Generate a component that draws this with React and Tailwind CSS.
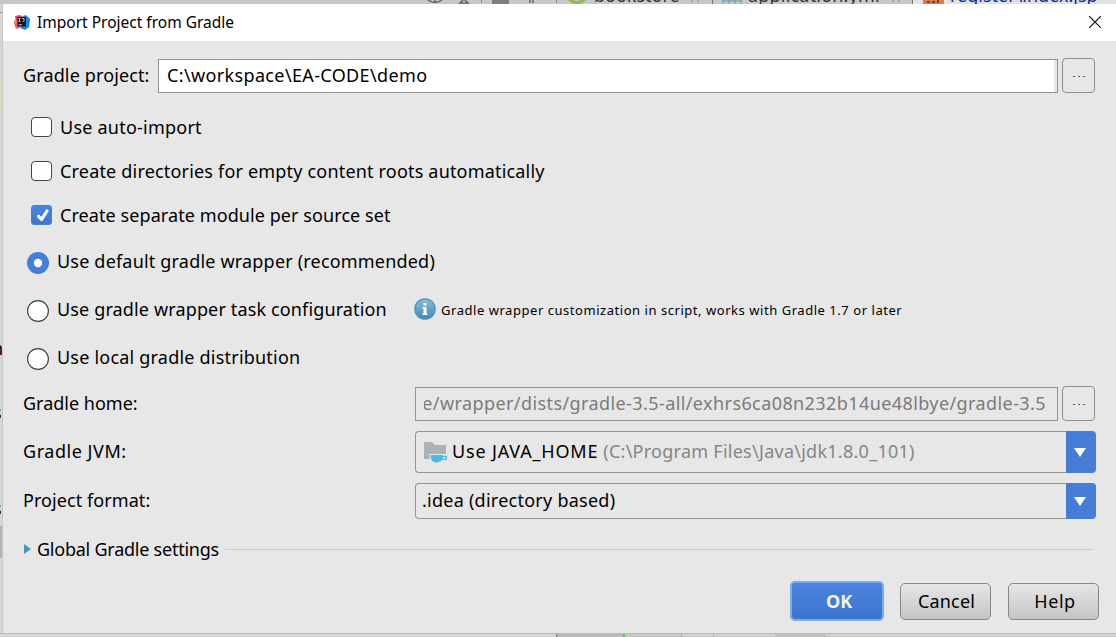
import React from "react";

function IdeaLogo() {
  return (
    <svg className="-mt-px h-4 w-4 shrink-0" viewBox="0 0 16 16">
      <path d="M1 2l5-1 3 2-2 9-5 2-1-3 1-3z" fill="#f0356c" />
      <path d="M0 8.500l4-1 2 6-4 1.500z" fill="#f0506a" />
      <path d="M0 6l3 1-1 3-2-1z" fill="#f58a4b" />
      <path d="M9 2l3-1 4 4-1 8-4 3-5-2 2-3z" fill="#1683f0" />
      <path d="M3.500 3h8.500v9.500H3.500z" fill="#17171c" />
      <path d="M4.500 4.500h2M5.500 4.500v3M4.500 7.500h2M8.200 4.500h1.800v2.500q0 .8-1.200.6M4.500 10.700h3.500" stroke="#fff" strokeWidth=".7" fill="none" />
    </svg>
  );
}

function Check({ checked, label, className }) {
  return (
    <label className="flex h-11 items-center pl-[28px]">
      {checked ? (
        <svg className="h-5 w-[21px] shrink-0" viewBox="0 0 21 20">
          <defs>
            <linearGradient id="checkFill" x1="0" y1="0" x2="0" y2="1">
              <stop offset="0" stopColor="#4a86e2" />
              <stop offset="1" stopColor="#3f74cb" />
            </linearGradient>
          </defs>
          <rect x=".5" y=".5" width="20" height="19" rx="2.500" fill="url(#checkFill)" stroke="#3f83e0" />
          <path d="M7.600 11.300l3 3 5.400-8.300" fill="none" stroke="#fff" strokeWidth="3.200" strokeLinecap="round" strokeLinejoin="round" />
        </svg>
      ) : (
        <span className="h-5 w-[21px] shrink-0 rounded-[4px] border border-[#444] bg-white" />
      )}
      <span className={"ml-2 " + className}>{label}</span>
    </label>
  );
}

function Radio({ checked, label, className }) {
  return (
    <span className="flex items-center pl-6">
      <svg className="h-[22px] w-[22px] shrink-0" viewBox="0 0 22 22">
        {checked ? (
          <>
            <circle cx="11" cy="11" r="11" fill="#457ed8" />
            <circle cx="11" cy="11" r="4.200" fill="#fff" />
          </>
        ) : (
          <circle cx="11" cy="11" r="10.400" fill="#fff" stroke="#3c3c3c" strokeWidth="1.100" />
        )}
      </svg>
      <span className={"-mt-[5px] ml-2 " + className}>{label}</span>
    </span>
  );
}

function Browse() {
  return (
    <button className="ml-1 flex h-[35px] w-[33px] shrink-0 items-center justify-center gap-[3px] rounded-[4px] border border-[#8e8e8e]">
      <i className="mt-px h-px w-[2px] bg-[#555]" />
      <i className="mt-px h-px w-[2px] bg-[#555]" />
      <i className="mt-px h-px w-[2px] bg-[#555]" />
    </button>
  );
}

function Select({ children, className }) {
  return (
    <div className={"flex w-[681px] " + className}>
      <div className="flex min-w-0 flex-1 items-center rounded-l-[4px] border border-r-0 border-[#949494]">{children}</div>
      <div className="flex w-[30px] items-center justify-center rounded-r-[4px] bg-[#457dd7]">
        <svg className="-ml-[2px] h-[9px] w-3" viewBox="0 0 12 9">
          <path d="M0 0h12L6 9z" fill="#fff" />
        </svg>
      </div>
    </div>
  );
}

function InfoIcon() {
  return (
    <svg className="h-[22px] w-[22px] shrink-0" viewBox="0 0 22 22">
      <defs>
        <linearGradient id="infoFill" x1="0" y1="0" x2="0" y2="1">
          <stop offset="0" stopColor="#8fbdd8" />
          <stop offset="1" stopColor="#3b89b8" />
        </linearGradient>
      </defs>
      <circle cx="11" cy="11" r="10.200" fill="url(#infoFill)" stroke="#4c94bf" strokeWidth="1.200" />
      <path d="M9.500 5h3v2.500h-3zM8.500 9h4v6.500h1V17h-5v-1.500h1v-5h-1z" fill="#fff" />
    </svg>
  );
}

function JdkIcon() {
  return (
    <svg className="h-[22px] w-6 shrink-0" viewBox="0 0 24 22">
      <path d="M0 1h8l3 3h11v9H5.500v5H0z" fill="#a9b3b9" />
      <path d="M6.500 14h12.500v.8h4v4h-5c-1.200 2-2.700 2.700-5.500 2.700s-6-1.700-6-7.500z" fill="#4cb8e3" />
      <path d="M18.800 16h2.800v1.400h-2.800z" fill="#e7e7e7" />
    </svg>
  );
}

function EditorTabs() {
  return (
    <div className="h-1 shrink-0 overflow-hidden bg-[#c8c8c8]">
      <div className="-mt-4 flex h-5 text-[18px] leading-[26px] whitespace-nowrap text-[#333]">
        <svg className="ml-[400px] h-5 w-[190px] shrink-0" viewBox="0 0 190 20">
          <path d="M27 15q8 7 16 0M35 14v5M60 19l4-4 4 4zM93 19v-2h15v2zM130 14v5M133 14v5" stroke="#666" strokeWidth="1.500" fill="none" />
          <path d="M81.500 14v5M156.500 14v5" stroke="#8a8a8a" />
          <path d="M169 15q8 7 16 0" stroke="#8fb84f" strokeWidth="3" fill="none" />
        </svg>
        <span className="-mt-[2px] ml-1 w-[92px]">bookstore</span>
        <svg className="h-5 w-[60px] shrink-0" viewBox="0 0 60 20">
          <path d="M5 18l4-4 4 4" stroke="#888" fill="none" />
          <path d="M26.500 14v6" stroke="#777" />
          <path d="M37 14v6M43 14v6M49 14v6M55 14v6M36 17h20" stroke="#5b9db4" fill="none" />
        </svg>
        <span className="-mt-[2px] ml-[2px] w-[140px] tracking-[0.2px]">application.yml</span>
        <svg className="h-5 w-[58px] shrink-0" viewBox="0 0 58 20">
          <path d="M4 18l4-4 4 4" stroke="#888" fill="none" />
          <path d="M25 14h33v6H25z" fill="#e4e4e4" />
          <path d="M24.500 14v6" stroke="#777" />
          <path d="M35 14h21v6H35z" fill="#dc7b4e" />
          <path d="M39 18h3M44 18h3M50 14v5" stroke="#5a2c16" strokeWidth="1.500" />
        </svg>
        <span className="-mt-[2px] flex-1 bg-[#e0e0e0] pl-1 text-[#0a2f9c]">register\index.jsp</span>
      </div>
    </div>
  );
}

export default function App() {
  return (
    <div className="flex h-[637px] w-[1116px] flex-col overflow-hidden bg-[#cfcfcf] text-[18px] leading-6 whitespace-nowrap text-black [font-family:'Noto_Sans','Open_Sans',sans-serif]">
      <EditorTabs />
      <div className="flex h-[629px] shrink-0">
        <div className="w-[3px] shrink-0 overflow-hidden border-r border-[#c8c8c8] bg-[#d6d6d6]">
          <div className="mt-2 h-[66px] border-t border-[#888]" />
          <div className="h-[30px] bg-[#dcd9bd]" />
          <div className="mt-[228px] -ml-2 leading-6">n</div>
          <div className="mt-10 -ml-[7px] leading-6">s</div>
          <div className="mt-[72px] -ml-[7px] leading-6">s</div>
          <div className="mt-[6px] h-8 bg-[#b5b5b5]" />
        </div>
        <div className="flex flex-1 flex-col bg-[#e7e7e7]">
          <header className="flex h-[37px] shrink-0 items-center bg-white pl-[11px]">
            <IdeaLogo />
            <h1 className="-mt-[2px] ml-[7px] text-[15.5px]">Import Project from Gradle</h1>
            <svg className="-mt-px mr-[15px] ml-auto h-3 w-3" viewBox="0 0 12 12">
              <path d="M0 0l12 12M12 0L0 12" stroke="#111" strokeWidth="1.200" />
            </svg>
          </header>

          <div className="mt-[17px] flex h-[35px] shrink-0 items-end pl-5">
            <span className="mb-[2px] w-[135px] self-center tracking-[0.13px]">Gradle project:</span>
            <div className="flex h-[34px] w-[900px] items-center border border-[#949494] bg-white pl-2">
              <span className="mb-[2px] tracking-[0.36px]">C:\workspace\EA-CODE\demo</span>
              <span className="ml-auto h-full w-[3px] bg-[#e7e7e7]" />
            </div>
            <Browse />
          </div>

          <div className="mt-3 shrink-0">
            <Check label="Use auto-import" className="tracking-[0.23px]" />
            <Check label="Create directories for empty content roots automatically" className="tracking-[0.185px]" />
            <Check checked label="Create separate module per source set" className="tracking-[0.08px]" />
          </div>

          <div className="mt-[2px] grid shrink-0 auto-rows-[48px] grid-cols-[411px_1fr] items-center">
            <Radio checked label="Use default gradle wrapper (recommended)" className="tracking-[0.19px]" />
            <span />
            <Radio label="Use gradle wrapper task configuration" className="tracking-[0.14px]" />
            <span className="-mt-1 flex items-center">
              <InfoIcon />
              <span className="mt-px ml-[5px] text-[13px] tracking-[0.54px]">Gradle wrapper customization in script, works with Gradle 1.7 or later</span>
            </span>
            <Radio label="Use local gradle distribution" className="tracking-[0.21px]" />
            <span />
          </div>

          <div className="mt-[3px] flex h-[35px] shrink-0 items-end pl-5">
            <span className="mb-[2px] w-[392px] self-center">Gradle home:</span>
            <div className="flex h-[34px] w-[643px] items-center border border-[#949494] pr-[11px] pl-2">
              <div className="mb-[2px] flex flex-1 justify-end overflow-hidden text-[#7b7b7b]">
                <span className="tracking-[0.41px]">e/wrapper/dists/gradle-3.5-all/exhrs6ca08n232b14ue48lbye/gradle-3.5</span>
              </div>
            </div>
            <Browse />
          </div>

          <div className="mt-[10px] flex h-[42px] shrink-0 items-center pl-5">
            <span className="mb-[2px] w-[392px] tracking-[0.54px]">Gradle JVM:</span>
            <Select className="h-[42px]">
              <span className="ml-2"><JdkIcon /></span>
              <span className="mb-[2px] ml-1 tracking-[0.82px]">Use JAVA_HOME</span>
              <span className="mb-[2px] ml-[5px] tracking-[0.26px] text-[#858585]">(C:\Program Files\Java\jdk1.8.0_101)</span>
            </Select>
          </div>

          <div className="mt-[10px] flex h-9 shrink-0 items-center pl-5">
            <span className="mb-[2px] w-[392px] tracking-[0.07px]">Project format:</span>
            <Select className="h-9">
              <span className="mb-[2px] ml-[6px] tracking-[0.25px]">.idea (directory based)</span>
            </Select>
          </div>

          <div className="mt-[18px] flex h-6 shrink-0 items-center pr-[23px] pl-[21px]">
            <svg className="h-[10px] w-[7px] shrink-0" viewBox="0 0 7 10">
              <path d="M0 0l7 5-7 5z" fill="#4695c5" />
            </svg>
            <span className="ml-[6px] w-[188px] tracking-[-0.24px]">Global Gradle settings</span>
            <span className="h-px flex-1 bg-[#cbcbcb]" />
          </div>

          <div className="mt-5 flex shrink-0 items-center justify-end pr-[17px]">
            <button className="flex h-10 w-[94px] items-center justify-center rounded-[5px] border-2 border-[#75aee9] bg-linear-to-b from-[#4a84df] to-[#3e74cb] pl-1 font-bold text-[#f2f2f2]">OK</button>
            <button className="ml-4 h-[37px] w-[91px] rounded-[5px] border border-[#888] bg-linear-to-b from-[#e6e6e6] to-[#c5c5c5] pl-[2px] tracking-[0.2px]">Cancel</button>
            <button className="ml-[17px] h-[37px] w-[91px] rounded-[5px] border border-[#888] bg-linear-to-b from-[#e6e6e6] to-[#c5c5c5] pl-[3px] tracking-[0.6px]">Help</button>
          </div>
        </div>
      </div>
      <div className="flex h-1 shrink-0 border-t border-[#bbb]">
        <span className="w-[556px] bg-[#d7d7d7]" />
        <span className="w-[67px] border-l border-[#777] bg-[#bababa]" />
        <span className="w-[2px] bg-[#65bb68]" />
        <span className="w-[56px] bg-[#c9c9c9]" />
        <span className="w-8 border-l border-[#b5b5b5] bg-[#d0d0d0]" />
        <span className="w-[62px] border-l border-[#b5b5b5] bg-[#d0d0d0]" />
        <span className="w-[51px] bg-[#c1c1c1]" />
        <span className="flex-1 bg-[#d0d0d0]" />
      </div>
    </div>
  );
}
